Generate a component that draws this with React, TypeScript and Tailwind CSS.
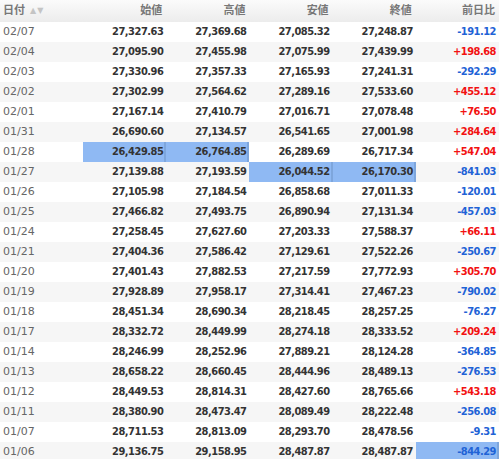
const rows: [string, string, string, string, string, string][] = [
  ["02/07", "27,327.63", "27,369.68", "27,085.32", "27,248.87", "-191.12"],
  ["02/04", "27,095.90", "27,455.98", "27,075.99", "27,439.99", "+198.68"],
  ["02/03", "27,330.96", "27,357.33", "27,165.93", "27,241.31", "-292.29"],
  ["02/02", "27,302.99", "27,564.62", "27,289.16", "27,533.60", "+455.12"],
  ["02/01", "27,167.14", "27,410.79", "27,016.71", "27,078.48", "+76.50"],
  ["01/31", "26,690.60", "27,134.57", "26,541.65", "27,001.98", "+284.64"],
  ["01/28", "26,429.85", "26,764.85", "26,289.69", "26,717.34", "+547.04"],
  ["01/27", "27,139.88", "27,193.59", "26,044.52", "26,170.30", "-841.03"],
  ["01/26", "27,105.98", "27,184.54", "26,858.68", "27,011.33", "-120.01"],
  ["01/25", "27,466.82", "27,493.75", "26,890.94", "27,131.34", "-457.03"],
  ["01/24", "27,258.45", "27,627.60", "27,203.33", "27,588.37", "+66.11"],
  ["01/21", "27,404.36", "27,586.42", "27,129.61", "27,522.26", "-250.67"],
  ["01/20", "27,401.43", "27,882.53", "27,217.59", "27,772.93", "+305.70"],
  ["01/19", "27,928.89", "27,958.17", "27,314.41", "27,467.23", "-790.02"],
  ["01/18", "28,451.34", "28,690.34", "28,218.45", "28,257.25", "-76.27"],
  ["01/17", "28,332.72", "28,449.99", "28,274.18", "28,333.52", "+209.24"],
  ["01/14", "28,246.99", "28,252.96", "27,889.21", "28,124.28", "-364.85"],
  ["01/13", "28,658.22", "28,660.45", "28,444.96", "28,489.13", "-276.53"],
  ["01/12", "28,449.53", "28,814.31", "28,427.60", "28,765.66", "+543.18"],
  ["01/11", "28,380.90", "28,473.47", "28,089.49", "28,222.48", "-256.08"],
  ["01/07", "28,711.53", "28,813.09", "28,293.70", "28,478.56", "-9.31"],
  ["01/06", "29,136.75", "29,158.95", "28,487.87", "28,487.87", "-844.29"],
]

// highlighted cells: row index -> column indexes
const highlights: Record<number, number[]> = {
  6: [1, 2],
  7: [3, 4],
  21: [5],
}

const headers = ["始値", "高値", "安値", "終値", "前日比"]

export default function App() {
  return (
    <div className="w-[499px] h-[459px] overflow-hidden bg-white font-['DejaVu_Sans','Noto_Sans_CJK_JP',sans-serif] text-[11px]">
      <table className="w-full table-fixed border-collapse">
        <thead>
          <tr className="h-[22px] bg-gradient-to-b from-[#fbfbfb] to-[#ececec] text-[#777]">
            <th className="text-left pl-[3px] font-bold">
              <span className="inline-flex items-center gap-[5px]">
                日付
                <span className="text-[8px] text-[#c4c4c4] tracking-[1px]">▲▼</span>
              </span>
            </th>
            {headers.map((h) => (
              <th key={h} className="text-right pr-[4px] font-bold">
                {h}
              </th>
            ))}
          </tr>
        </thead>
        <tbody>
          {rows.map((row, i) => {
            const hl = highlights[i] ?? []
            return (
              <tr key={row[0]} className={i % 2 === 1 ? "h-[20px] bg-[#f6f6f6]" : "h-[20px] bg-white"}>
                <td className="pl-[3px] text-left text-[#666]">{row[0]}</td>
                {row.slice(1).map((v, j) => {
                  const col = j + 1
                  const isHl = hl.includes(col)
                  const color =
                    col === 5 ? (v.startsWith("-") ? "text-[#1f63d6]" : "text-[#f21111]") : "text-[#333]"
                  return (
                    <td
                      key={col}
                      className={`text-right pr-[3px] font-bold tracking-[-0.5px] font-['DejaVu_Sans_Condensed','DejaVu_Sans',sans-serif] ${color} ${
                        isHl ? "bg-[#8fb9f3] shadow-[inset_-2px_0_0_#7ea6dc]" : ""
                      }`}
                    >
                      {v}
                    </td>
                  )
                })}
              </tr>
            )
          })}
        </tbody>
      </table>
    </div>
  )
}
